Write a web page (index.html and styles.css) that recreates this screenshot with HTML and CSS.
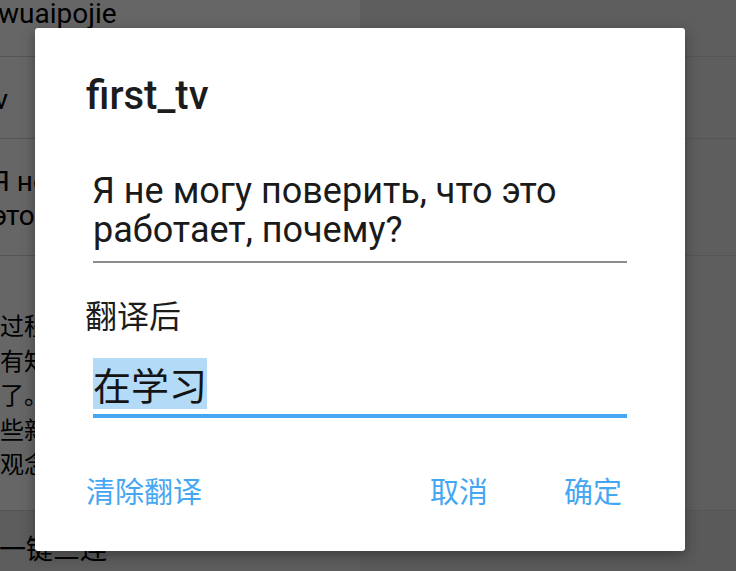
FILE: index.html
```html
<!DOCTYPE html>
<html lang="zh">
<head>
<meta charset="utf-8">
<title>first_tv</title>
<link rel="stylesheet" href="styles.css">
</head>
<body>
<div class="screen">
  <div class="table">
    <div class="row r1">
      <div class="cell src"><span class="t t1">wuaipojie</span></div>
      <div class="cell dst"></div>
    </div>
    <div class="row r2">
      <div class="cell src"><span class="t t2">first_tv</span></div>
      <div class="cell dst"></div>
    </div>
    <div class="row r3">
      <div class="cell src"><p class="t t3">Я не могу поверить, что<br>это работает, почему?</p></div>
      <div class="cell dst"></div>
    </div>
    <div class="row r4">
      <div class="cell src"><p class="t t4">过程中我学到了很多东西<br>有知识也有经验收获很大<br>了。同时也接触到了一<br>些新的技术和新的<br>观念。</p></div>
      <div class="cell dst"></div>
    </div>
    <div class="row r5">
      <div class="cell src"><span class="t t5">一键三连</span></div>
      <div class="cell dst"></div>
    </div>
  </div>

  <div class="scrim">
    <div class="dialog">
      <h1 class="title">first_tv</h1>
      <div class="field field-plain">Я не могу поверить, что это работает, почему?</div>
      <div class="label">翻译后</div>
      <div class="field field-focus"><span class="sel">在学习</span></div>
      <div class="actions">
        <span class="btn">清除翻译</span>
        <div class="btn-group">
          <span class="btn">取消</span>
          <span class="btn">确定</span>
        </div>
      </div>
    </div>
  </div>
</div>
</body>
</html>
```

FILE: styles.css
```css
* { box-sizing: border-box; }

html, body {
  margin: 0;
  padding: 0;
  width: 736px;
  height: 571px;
  overflow: hidden;
  background: #ffffff;
}

.screen {
  position: relative;
  width: 736px;
  height: 571px;
  overflow: hidden;
  font-family: Roboto, "Noto Sans CJK SC", sans-serif;
}

/* background list */
.table {
  display: flex;
  flex-direction: column;
}

.row {
  display: grid;
  grid-template-columns: 360px 1fr;
  border-bottom: 1px solid #d4d4d4;
}

.r1 { height: 57px; }
.r2 { height: 82px; }
.r3 { height: 117px; }
.r4 { height: 255px; }
.r5 { height: 80px; border-bottom: none; }

.cell {
  overflow: hidden;
  white-space: nowrap;
}

.src { background: #ffffff; }
.dst { background: #ececec; }
.r5 .src { background: #e8e8e8; }
.r5 .dst { background: #e2e2e2; }

.t {
  display: block;
  margin: 0;
  color: #000;
  font-size: 28px;
  line-height: 34px;
}

.t1 { margin: -3px 0 0 -2px; }
.t2 { margin: 26px 0 0 -76px; }
.t3 { margin: 26px 0 0 -8px; }
.t4 {
  margin: 52px 0 0 0;
  font-family: "Noto Sans CJK SC", sans-serif;
  font-size: 24px;
  line-height: 34.5px;
}
.t5 {
  margin: 20px 0 0 -1px;
  font-family: "Noto Sans CJK SC", sans-serif;
  font-size: 27px;
}

/* scrim + dialog */
.scrim {
  position: absolute;
  inset: 0;
  background: rgba(0, 0, 0, 0.6);
  padding: 28px 0 0 35px;
}

.dialog {
  width: 650px;
  height: 523px;
  background: #ffffff;
  border-radius: 3px;
  box-shadow: 0 4px 14px rgba(0, 0, 0, 0.35);
  padding: 44px 51px 0;
  display: flex;
  flex-direction: column;
}

.title {
  margin: 0;
  font-family: Roboto, sans-serif;
  font-weight: 500;
  font-size: 40px;
  line-height: 48px;
  color: #1c1c1c;
}

.field {
  margin: 0 7px;
}

.field-plain {
  margin-top: 52px;
  padding-bottom: 11px;
  border-bottom: 2px solid #8c8c8c;
  font-family: Roboto, sans-serif;
  font-size: 36px;
  line-height: 39px;
  color: #1a1a1a;
  text-indent: -1px;
}

.label {
  margin-top: 31px;
  font-family: "Noto Sans CJK SC", sans-serif;
  font-size: 32px;
  line-height: 40px;
  color: #1c1c1c;
  margin-left: -1px;
}

.field-focus {
  margin-top: 24px;
  padding-bottom: 5px;
  border-bottom: 4px solid #45a7f3;
  height: 60px;
}

.sel {
  display: inline-block;
  vertical-align: top;
  height: 51px;
  line-height: 51px;
  background: #b3dbf8;
  font-family: "Noto Sans CJK SC", sans-serif;
  font-size: 38px;
  color: #141414;
}

.actions {
  margin-top: 52px;
  margin-right: 12px;
  display: flex;
  justify-content: space-between;
  font-family: "Noto Sans CJK SC", sans-serif;
  font-size: 29px;
  line-height: 40px;
  color: #45a7f3;
}

.btn-group {
  display: flex;
  gap: 76px;
}
```
